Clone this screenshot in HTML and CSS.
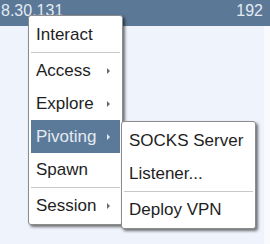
FILE: index.html
```html
<!DOCTYPE html>
<html>
<head>
<meta charset="utf-8">
<link rel="stylesheet" href="styles.css">
</head>
<body>
<div class="view">
  <div class="bar">
    <span class="cell-left">8.30.131</span>
    <span class="cell-right">192</span>
  </div>
  <div class="menu main">
    <div class="item">Interact</div>
    <div class="sep"></div>
    <div class="item sub">Access<span class="arrow"></span></div>
    <div class="item sub">Explore<span class="arrow"></span></div>
    <div class="item sub active">Pivoting<span class="arrow"></span></div>
    <div class="item">Spawn</div>
    <div class="sep"></div>
    <div class="item sub">Session<span class="arrow"></span></div>
  </div>
  <div class="menu submenu">
    <div class="item">SOCKS Server</div>
    <div class="item">Listener...</div>
    <div class="sep"></div>
    <div class="item">Deploy VPN</div>
  </div>
</div>
</body>
</html>
```

FILE: styles.css
```css
html, body {
  margin: 0;
  padding: 0;
  background: #ffffff;
}
body {
  font-family: "Liberation Sans", Arial, sans-serif;
}
.view {
  position: relative;
  width: 270px;
  height: 244px;
  overflow: hidden;
  background: linear-gradient(to right, #eff3fb 0, #eff3fb 264px, #f8fafd 264px);
}
.bar {
  height: 26px;
  background: #5c7897;
  color: #e3eaf2;
  font-size: 16px;
  line-height: 22px;
  display: flex;
  justify-content: space-between;
  white-space: nowrap;
}
.cell-left {
  padding-left: 1px;
}
.cell-right {
  padding-right: 7px;
}
.menu {
  position: absolute;
  background: #ffffff;
  border: 1px solid #8c8c8c;
  border-radius: 3px;
  padding: 2px;
  box-shadow: 2px 2px 3px rgba(0, 0, 0, 0.55);
  font-size: 17px;
  color: #1e1e1e;
}
.main {
  left: 28px;
  top: 15px;
  width: 89px;
}
.submenu {
  left: 121px;
  top: 121px;
  width: 129px;
}
.item {
  position: relative;
  height: 33px;
  line-height: 33px;
  padding-left: 5px;
  white-space: nowrap;
}
.item.active {
  background: #5b7a9a;
  color: #e4eaf1;
}
.arrow {
  position: absolute;
  right: 10px;
  top: 14px;
  width: 0;
  height: 0;
  border-top: 3px solid transparent;
  border-bottom: 3px solid transparent;
  border-left: 3px solid #6a6a6a;
}
.item.active .arrow {
  border-left-color: #e4eaf1;
}
.sep {
  height: 1px;
  margin: 1px 0;
  background: #c8c8c8;
}
```
